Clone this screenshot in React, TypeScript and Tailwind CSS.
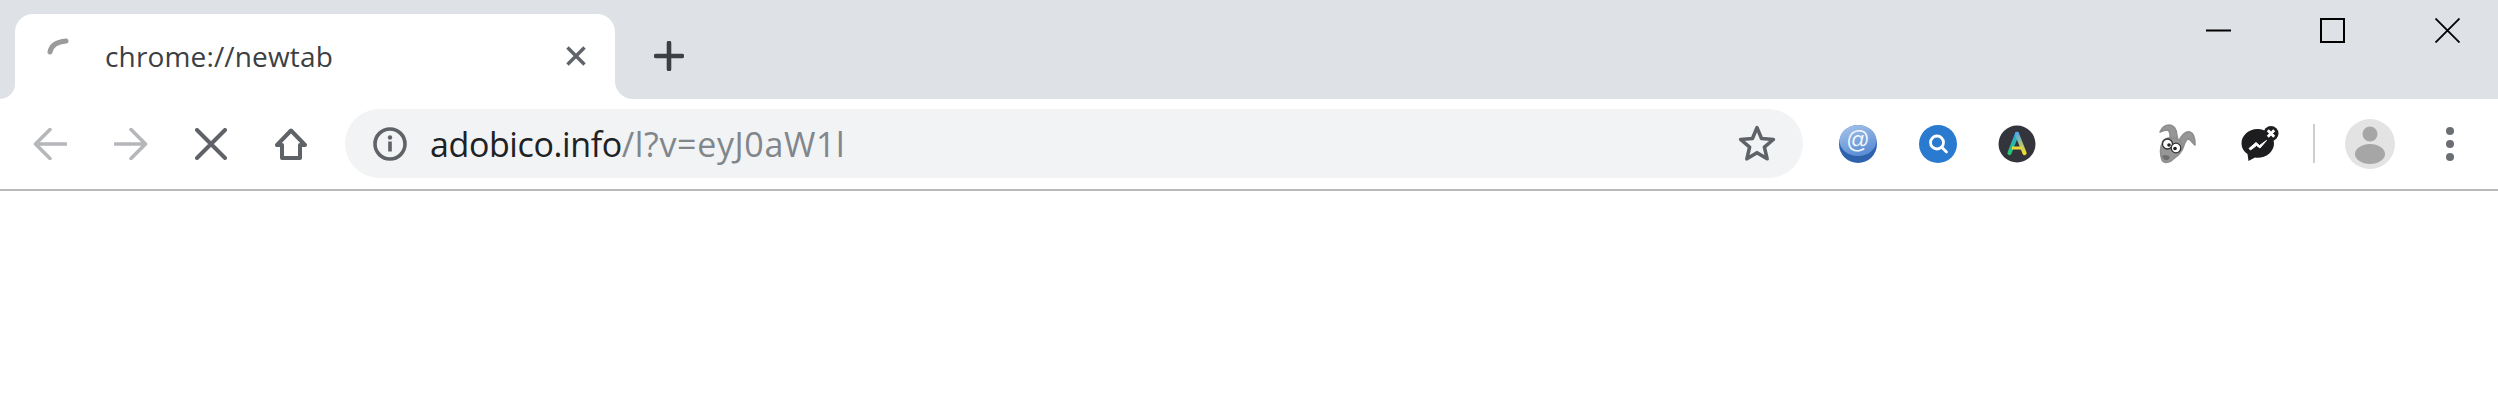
const ICON = '#5f6368';
const MUTED = '#b5b7ba';

function Spinner() {
  return (
    <svg width="24" height="20" viewBox="0 0 24 20" className="mb-[21px] shrink-0">
      <path d="M4 16C5 10 10 6 20 5" fill="none" stroke="#9b9b9b" strokeWidth="5" strokeLinecap="round" />
    </svg>
  );
}

function Arrow({ flip }: { flip?: boolean }) {
  return (
    <svg width="34" height="32" viewBox="0 0 34 32" className={flip ? 'rotate-180' : ''}>
      <path d="M33 16H3M17 1.500L2.500 16 17 30.500" fill="none" stroke={MUTED} strokeWidth="3.600" strokeLinecap="round" strokeLinejoin="round" />
    </svg>
  );
}

function EmailIcon() {
  return (
    <svg width="40" height="40" viewBox="0 0 40 40">
      <defs>
        <linearGradient id="mailTop" x1="0" y1="0" x2="0.4" y2="1">
          <stop offset="0" stopColor="#a9c5ea" />
          <stop offset="1" stopColor="#5c8fd6" />
        </linearGradient>
      </defs>
      <circle cx="20" cy="20" r="19" fill="#2f62ad" />
      <ellipse cx="20" cy="16.500" rx="18.500" ry="15.500" fill="url(#mailTop)" />
      <text x="20" y="24" textAnchor="middle" fontSize="23" fontFamily="'Liberation Sans', sans-serif" fill="#f1f6fc">@</text>
    </svg>
  );
}

function SearchIcon() {
  return (
    <svg width="38" height="38" viewBox="0 0 38 38">
      <circle cx="19" cy="19" r="19" fill="#2a7bd0" />
      <circle cx="18" cy="17.500" r="6.500" fill="none" stroke="#fff" strokeWidth="2.800" />
      <path d="M23 22.500L27.500 27" stroke="#fff" strokeWidth="2.800" strokeLinecap="round" />
    </svg>
  );
}

function ArcIcon() {
  return (
    <svg width="38" height="38" viewBox="0 0 38 38">
      <defs>
        <linearGradient id="arcLeft" x1="0" y1="0" x2="0" y2="1">
          <stop offset="0" stopColor="#29a9e8" />
          <stop offset="1" stopColor="#27c46f" />
        </linearGradient>
        <linearGradient id="arcRight" x1="0" y1="0" x2="0" y2="1">
          <stop offset="0" stopColor="#5aa7e0" />
          <stop offset="1" stopColor="#f2dc2a" />
        </linearGradient>
      </defs>
      <circle cx="19" cy="19" r="18.500" fill="#33343c" />
      <path d="M19 9L11.500 28" stroke="url(#arcLeft)" strokeWidth="4.200" strokeLinecap="round" fill="none" />
      <path d="M19 9L26.500 28" stroke="url(#arcRight)" strokeWidth="4.200" strokeLinecap="round" fill="none" />
      <path d="M14 23H24" stroke="#e8d83a" strokeWidth="3" />
    </svg>
  );
}

function RabbitIcon() {
  return (
    <svg width="38" height="40" viewBox="0 0 38 40">
      <g fill="#979797" stroke="#8e8e8e" strokeWidth="1.600" strokeLinejoin="round">
        <path d="M11 17C11 11 12 8 9 6C6 6 3 7 1 8C3 3 6 1 10 1C15 1 18 6 18 12L19 17Z" />
        <path d="M19 19C22 11 27 7 31 8C35 9 36 14 36 21C33 18 31 15 29 15C26 16 25 22 23 26Z" />
        <path d="M4 17C8 12 19 13 23 19C25 24 22 29 18 32L12 37C8 39 4 39 3 36C1 30 1 23 4 17Z" />
      </g>
      <path d="M3 32C6 30 9 31 11 33C10 37 5 38 3 32Z" fill="#6f6f6f" />
      <circle cx="8.500" cy="20" r="5" fill="#fff" stroke="#333" strokeWidth="1.300" />
      <circle cx="17" cy="24" r="4.800" fill="#fff" stroke="#333" strokeWidth="1.300" />
      <circle cx="10" cy="21" r="1.800" fill="#222" />
      <circle cx="16" cy="24.500" r="1.800" fill="#222" />
    </svg>
  );
}

function MessengerIcon() {
  return (
    <svg width="38" height="36" viewBox="0 0 38 36">
      <path d="M16.500 3C7.500 3 0.500 9.500 0.500 17.500C0.500 22 2.800 25.500 6.500 28L7.500 35L14 31.500C14.800 31.700 15.600 31.800 16.500 31.800C25.500 31.800 33 25.500 33 17.500C33 9.500 25.500 3 16.500 3Z" fill="#1d1d1f" />
      <path d="M8 22.500L15 16.500L18.500 19.500L25.500 14.500L19 22L15.500 19.500L9.500 24Z" fill="#fff" stroke="#fff" strokeWidth="1" strokeLinejoin="round" />
      <circle cx="30" cy="7.500" r="7.500" fill="#1d1d1f" />
      <path d="M26.800 4.300L33.200 10.700M33.200 4.300L26.800 10.700" stroke="#fff" strokeWidth="2.800" />
    </svg>
  );
}

function AvatarIcon() {
  return (
    <svg width="50" height="50" viewBox="0 0 50 50">
      <circle cx="25" cy="25" r="25" fill="#e3e3e3" />
      <circle cx="25" cy="15" r="7.500" fill="#a6a6a6" />
      <ellipse cx="25" cy="35" rx="15" ry="10" fill="#a6a6a6" />
    </svg>
  );
}

export default function App() {
  return (
    <div className="h-[420px] w-full overflow-hidden bg-white font-['Open_Sans',sans-serif]">
      {/* tab strip */}
      <div className="flex h-[99px] justify-between bg-[#dee1e6] pl-[15px]">
        <div className="flex items-end">
          <div className="relative flex h-[85px] w-[600px] items-center rounded-t-[18px] bg-white pb-[1px] pl-[31px] pr-[28px]">
            <div className="absolute -left-[15px] bottom-0 size-[15px] bg-white">
              <div className="size-full rounded-br-[15px] bg-[#dee1e6]" />
            </div>
            <div className="absolute -right-[18px] bottom-0 size-[18px] bg-white">
              <div className="size-full rounded-bl-[18px] bg-[#dee1e6]" />
            </div>
            <Spinner />
            <span className="ml-[35px] text-[28px] leading-none tracking-[0.15px] text-[#3c4043]">chrome://newtab</span>
            <svg width="22" height="22" viewBox="0 0 22 22" className="ml-auto">
              <path d="M2.500 2.500L19.500 19.500M19.500 2.500L2.500 19.500" stroke={ICON} strokeWidth="3.400" />
            </svg>
          </div>
          <svg width="30" height="30" viewBox="0 0 30 30" className="mb-[28px] ml-[39px]">
            <path d="M15 2V28M2 15H28" stroke="#3c4043" strokeWidth="4.600" strokeLinecap="round" />
          </svg>
        </div>
        {/* window controls */}
        <div className="flex items-start pt-[18px] pr-[38px]">
          <svg width="25" height="25" viewBox="0 0 25 25">
            <path d="M0 12.500H25" stroke="#000" strokeWidth="2" />
          </svg>
          <svg width="25" height="25" viewBox="0 0 25 25" className="ml-[89px]">
            <rect x="1" y="1" width="23" height="23" fill="none" stroke="#000" strokeWidth="2" />
          </svg>
          <svg width="25" height="25" viewBox="0 0 25 25" className="ml-[90px]">
            <path d="M0.500 0.500L24.500 24.500M24.500 0.500L0.500 24.500" stroke="#000" strokeWidth="1.800" />
          </svg>
        </div>
      </div>

      {/* toolbar */}
      <div className="flex h-[92px] items-center border-b-2 border-[#b9b9b9] pl-[33px] pb-[1px]">
        <Arrow />
        <div className="ml-[47px]">
          <Arrow flip />
        </div>
        <svg width="32" height="32" viewBox="0 0 32 32" className="ml-[47px]">
          <path d="M2 2L30 30M30 2L2 30" stroke={ICON} strokeWidth="4" strokeLinecap="round" />
        </svg>
        <svg width="32" height="32" viewBox="0 0 32 32" className="ml-[48px]">
          <path d="M16 2.500L2 17H7V30H25V17H30Z" fill="none" stroke={ICON} strokeWidth="4" strokeLinejoin="round" />
        </svg>

        <div className="ml-[38px] flex h-[69px] w-[1458px] items-center rounded-full bg-[#f1f3f4] pl-[28px] pr-[27px]">
          <svg width="34" height="34" viewBox="0 0 34 34" className="shrink-0">
            <circle cx="17" cy="17" r="15" fill="none" stroke={ICON} strokeWidth="3.600" />
            <circle cx="17" cy="10.500" r="2.200" fill={ICON} />
            <rect x="15.200" y="14.500" width="3.600" height="10" fill={ICON} />
          </svg>
          <span className="ml-[23px] whitespace-nowrap text-[34px] leading-none tracking-[-0.4px] text-[#202124]">
            adobico.info<span className="tracking-[0.65px] text-[#80868b]">/l?v=eyJ0aW1l</span>
          </span>
          <svg width="38" height="37" viewBox="0 1 36 35" className="ml-auto shrink-0">
            <path d="M18 3.500L22.300 13.800L33.500 14.700L25 22L27.600 33L18 27.200L8.400 33L11 22L2.500 14.700L13.700 13.800Z" fill="none" stroke={ICON} strokeWidth="3.400" strokeLinejoin="round" />
          </svg>
        </div>

        {/* extensions */}
        <div className="ml-[35px] flex items-center">
          <EmailIcon />
          <div className="ml-[41px]">
            <SearchIcon />
          </div>
          <div className="ml-[41px]">
            <ArcIcon />
          </div>
          <div className="ml-[123px]">
            <RabbitIcon />
          </div>
          <div className="ml-[44px]">
            <MessengerIcon />
          </div>
          <div className="ml-[34px] h-[39px] w-[2px] bg-[#cfcfcf]" />
          <div className="ml-[30px]">
            <AvatarIcon />
          </div>
          <div className="ml-[51px] flex flex-col gap-[5px]">
            <div className="size-[8px] rounded-full bg-[#6b6e73]" />
            <div className="size-[8px] rounded-full bg-[#6b6e73]" />
            <div className="size-[8px] rounded-full bg-[#6b6e73]" />
          </div>
        </div>
      </div>
    </div>
  );
}
